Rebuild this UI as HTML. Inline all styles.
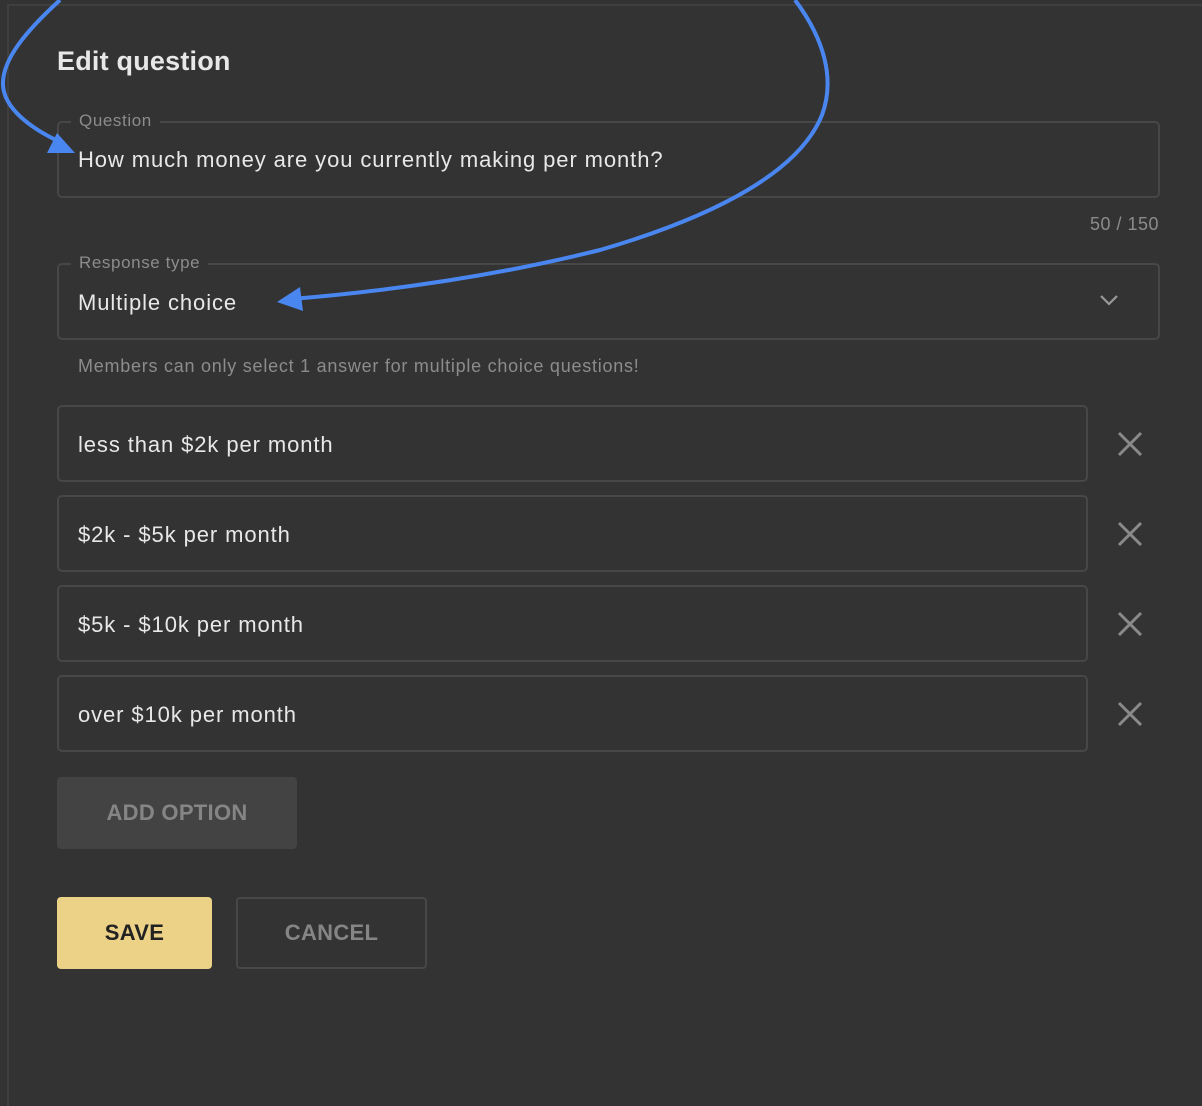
<!DOCTYPE html>
<html><head><style>
body{margin:0;width:1202px;height:1000px;background:#333;font-family:"Liberation Sans",sans-serif;position:relative;overflow:hidden}
.frame{position:absolute;left:7px;top:4px;width:1300px;height:1100px;border-left:2px solid #3f3f3f;border-top:2px solid #3f3f3f}
.a{position:absolute}
.box{position:absolute;border:2px solid #474747;border-radius:5px;box-sizing:border-box}
.lbl{position:absolute;top:-12px;left:12px;padding:0 8px;background:#333;color:#8c8c8c;font-size:17px;letter-spacing:0.6px}
.txt{position:absolute;left:19px;color:#e8e8e8;font-size:22px;letter-spacing:0.9px}
.btn{position:absolute;border-radius:4px;box-sizing:border-box;font-weight:bold;font-size:22px;text-align:center;letter-spacing:0.3px}
</style></head><body>
<div class="frame"></div>
<div class="a" style="left:57px;top:46px;color:#e8e8e8;font-size:27px;font-weight:bold;letter-spacing:0.2px">Edit question</div>
<div class="box" style="left:57px;top:121px;width:1103px;height:77px"><div class="lbl">Question</div><div class="txt" style="top:24px">How much money are you currently making per month?</div></div>
<div class="a" style="right:43px;top:214px;color:#8c8c8c;font-size:18px;letter-spacing:0.5px">50 / 150</div>
<div class="box" style="left:57px;top:263px;width:1103px;height:77px"><div class="lbl">Response type</div><div class="txt" style="top:25px">Multiple choice</div>
<svg class="a" style="left:1040px;top:28px" width="20" height="14"><path d="M2 3 L10 11 L18 3" stroke="#999" stroke-width="2.2" fill="none"/></svg></div>
<div class="a" style="left:78px;top:356px;color:#8c8c8c;font-size:18px;letter-spacing:0.75px">Members can only select 1 answer for multiple choice questions!</div>
<div class="box" style="left:57px;top:405px;width:1031px;height:77px"><div class="txt" style="top:25px">less than $2k per month</div></div>
<div class="box" style="left:57px;top:495px;width:1031px;height:77px"><div class="txt" style="top:25px">$2k - $5k per month</div></div>
<div class="box" style="left:57px;top:585px;width:1031px;height:77px"><div class="txt" style="top:25px">$5k - $10k per month</div></div>
<div class="box" style="left:57px;top:675px;width:1031px;height:77px"><div class="txt" style="top:25px">over $10k per month</div></div>
<svg class="a" style="left:0;top:0" width="1202" height="1000">
<g stroke="#8a8a8a" stroke-width="3">
<path d="M1119 433 L1141 455 M1141 433 L1119 455"/>
<path d="M1119 523 L1141 545 M1141 523 L1119 545"/>
<path d="M1119 613 L1141 635 M1141 613 L1119 635"/>
<path d="M1119 703 L1141 725 M1141 703 L1119 725"/>
</g>
<path d="M60 0 C25 32 2 60 3 85 C4 108 30 128 60 142" stroke="#4a86f0" stroke-width="4" fill="none"/>
<polygon points="47,153 75,153 57,133" fill="#4a86f0"/>
<path d="M795 0 C825 40 835 80 822 115 C800 170 720 215 600 250 C500 275 400 290 292 299" stroke="#4a86f0" stroke-width="4" fill="none"/>
<polygon points="277,302 300,287 303,311" fill="#4a86f0"/>
</svg>
<div class="btn" style="left:57px;top:777px;width:240px;height:72px;background:#434343;color:#858585;line-height:72px">ADD OPTION</div>
<div class="btn" style="left:57px;top:897px;width:155px;height:72px;background:#ecd287;color:#222;line-height:72px">SAVE</div>
<div class="btn" style="left:236px;top:897px;width:191px;height:72px;border:2px solid #474747;color:#858585;line-height:68px">CANCEL</div>
</body></html>
